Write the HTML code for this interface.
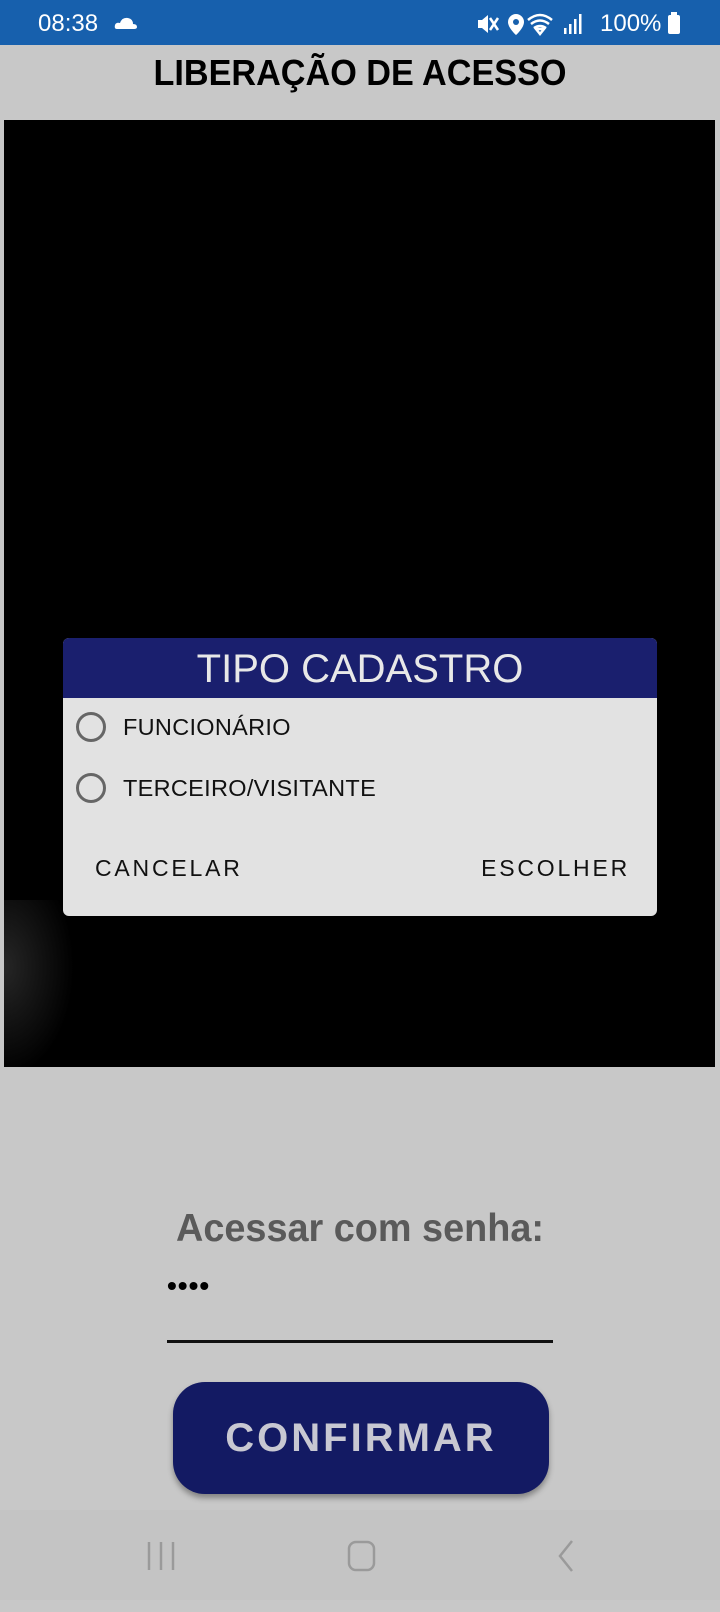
<!DOCTYPE html><html><head><meta charset="utf-8"><style>
body{margin:0;width:720px;height:1600px;background:#c8c8c8;font-family:"Liberation Sans",sans-serif;position:relative;overflow:hidden}
.a{position:absolute}
</style></head><body>
<div class="a" style="left:0;top:0;width:720px;height:45px;background:#1760ad;color:#fff;font-size:24px">
<span class="a" style="left:38px;top:10px">08:38</span>
<svg class="a" style="left:114px;top:16px" width="24" height="14"><path d="M3 13 Q0 13 1 9 Q2 6 6 7 Q8 1 14 2 Q19 3 19 8 Q23 8 23 11 Q23 13 20 13Z" fill="#fff"/></svg>
<svg class="a" style="left:476px;top:12px" width="120" height="24" fill="#fff"><path d="M2 8h4l6-5v18l-6-5H2z"/><path d="M14 6l8 12M22 6l-8 12" stroke="#fff" stroke-width="2.5"/><path d="M40 2a8 8 0 0 1 8 8c0 6-8 13-8 13s-8-7-8-13a8 8 0 0 1 8-8z"/><circle cx="40" cy="10" r="3" fill="#1760ad"/><path d="M52 8q12-10 24 0M55 12q9-7 18 0M58 16q6-4 12 0M64 22l-4-5h8z" stroke="#fff" stroke-width="2.5" fill="none"/><rect x="88" y="16" width="2.5" height="6"/><rect x="93" y="12" width="2.5" height="10"/><rect x="98" y="7" width="2.5" height="15"/><rect x="103" y="2" width="2.5" height="20"/></svg>
<span class="a" style="left:600px;top:10px">100%</span>
<svg class="a" style="left:667px;top:12px" width="14" height="24"><rect x="4" y="0" width="6" height="3" fill="#fff"/><rect x="1" y="3" width="12" height="19" rx="2" fill="#fff"/></svg>
</div>
<div class="a" style="left:0;top:52px;width:720px;text-align:center;font-weight:bold;font-size:36px;transform:scaleX(.95)">LIBERAÇÃO DE ACESSO</div>
<div class="a" style="left:4px;top:120px;width:711px;height:947px;background:#000"></div>
<div class="a" style="left:4px;top:900px;width:70px;height:167px;background:radial-gradient(ellipse 70px 110px at 0% 40%,#262626,#000)"></div>
<div class="a" style="left:63px;top:638px;width:594px;height:278px;background:#e2e2e2;border-radius:6px;overflow:hidden">
<div style="height:60px;background:#1a1f6e;color:#e8e8e8;font-size:40px;text-align:center;line-height:62px">TIPO CADASTRO</div>
<div class="a" style="left:13px;top:74px;width:30px;height:30px;border:3px solid #666;border-radius:50%;box-sizing:border-box"></div>
<div class="a" style="left:60px;top:76px;font-size:23.5px;letter-spacing:.3px;color:#111">FUNCIONÁRIO</div>
<div class="a" style="left:13px;top:135px;width:30px;height:30px;border:3px solid #666;border-radius:50%;box-sizing:border-box"></div>
<div class="a" style="left:60px;top:137px;font-size:23.5px;letter-spacing:.3px;color:#111">TERCEIRO/VISITANTE</div>
<div class="a" style="left:32px;top:217px;font-size:23px;letter-spacing:2.8px;color:#111">CANCELAR</div>
<div class="a" style="right:27px;top:217px;font-size:23px;letter-spacing:2.8px;color:#111">ESCOLHER</div>
</div>
<div class="a" style="left:0;top:1207px;width:720px;text-align:center;font-weight:bold;font-size:39px;color:#5a5a5a;transform:scaleX(.97)">Acessar com senha:</div>
<div class="a" style="left:167px;top:1270px;font-size:28px;letter-spacing:1px;font-weight:bold">••••</div>
<div class="a" style="left:167px;top:1340px;width:386px;height:3px;background:#111"></div>
<div class="a" style="left:173px;top:1382px;width:376px;height:112px;background:#131a63;border-radius:32px;box-shadow:0 4px 6px rgba(0,0,0,.35);color:#c8c8d2;font-size:40px;letter-spacing:3px;text-align:center;line-height:112px;font-weight:bold">CONFIRMAR</div>
<div class="a" style="left:0;top:1510px;width:720px;height:90px;background:#c4c4c4"></div>
<svg class="a" style="left:0;top:1522px" width="720" height="90"><g stroke="#9a9a9a" stroke-width="2.5" fill="none"><path d="M149 20v28M161 20v28M173 20v28"/><rect x="349" y="20" width="25" height="28" rx="7"/><path d="M572 19l-12 15 12 15"/></g></svg>
</body></html>
